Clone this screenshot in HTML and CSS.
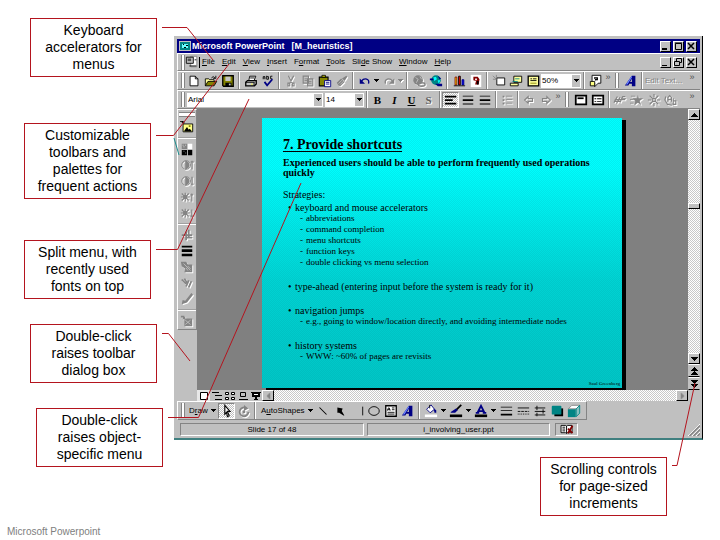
FILE: index.html
```html
<!DOCTYPE html>
<html lang="en">
<head>
<meta charset="utf-8">
<title>Microsoft Powerpoint</title>
<link rel="stylesheet" href="styles.css">
</head>
<body>
<svg class="sprite" aria-hidden="true">
  <symbol id="caret" viewBox="0 0 5 3"><path d="M0 0h5v1h-1v1h-1v1h-1v-1h-1v-1h-1z"/></symbol>
  <symbol id="up" viewBox="0 0 7 4"><path d="M3 0h1v1h1v1h1v1h1v1h-7v-1h1v-1h1v-1h1z"/></symbol>
  <symbol id="new" viewBox="0 0 16 16"><path fill="#fff" stroke="#000" d="M3.500 2.500h6l3 3v8h-9z"/><path fill="none" stroke="#000" d="M9.500 2.500v3h3"/></symbol>
  <symbol id="open" viewBox="0 0 16 16"><path fill="#ffff9c" stroke="#000" d="M1.500 13.500v-8h4l1 1h5v2"/><path fill="#848400" stroke="#000" d="M1.500 13.500l3-5h10l-3 5z"/><path fill="none" stroke="#000" d="M8.500 4.500q2-3 4 0M13.500 2v3h-3"/></symbol>
  <symbol id="save" viewBox="0 0 16 16"><path fill="#848400" stroke="#000" stroke-width="1.500" d="M2 2h12v12h-11l-1-1z"/><path fill="#c6c6c6" d="M5 3h6v5h-6z"/><path d="M5 10h7v4h-7z"/><path fill="#c6c6c6" d="M9 11h2v2h-2z"/></symbol>
  <symbol id="print" viewBox="0 0 16 16"><path fill="#fff" stroke="#000" d="M5.500 7.500l1-5h7l-2 5"/><path fill="#c6c6c6" stroke="#000" stroke-width="1.500" d="M2 9.500l2-2h10v4l-2 2h-10z"/><path stroke="#000" d="M2 9.500h10M7 4.500h5M11.500 9.500v4"/><path fill="#ff0" d="M8 11h2v1h-2z"/></symbol>
  <symbol id="spell" viewBox="0 0 16 16"><path fill="none" stroke="#000" d="M2.500 6v-3h2v3M3 4.500h1M6.500 2v4h2v-3h-2M13 2.500h-2v3h2"/><path fill="none" stroke="#000084" stroke-width="2" d="M4 9l3 4 6-7"/></symbol>
  <symbol id="cut" viewBox="0 0 16 16"><path fill="none" stroke="currentColor" stroke-width="1.300" d="M5 2l4 8M11 2l-4 8M4.500 10.500h2v3h-2zM9.500 10.500h2v3h-2z"/></symbol>
  <symbol id="copy" viewBox="0 0 16 16"><path fill="#c0c0c0" stroke="currentColor" stroke-width="1.300" d="M2.500 2.500h6v8h-6zM7.500 5.500h6v8h-6z"/><path stroke="currentColor" d="M4 5.500h3M4 7.500h3M9 8.500h3M9 10.500h3"/></symbol>
  <symbol id="paste" viewBox="0 0 16 16"><path fill="#848400" stroke="#000" stroke-width="1.300" d="M1.500 3.500h10v10h-10z"/><path fill="#ff0" stroke="#000" d="M4.500 1.500h4v2h-4z"/><path fill="#fff" stroke="#000084" d="M7.500 7.500h7v7h-7z"/><path stroke="#000084" d="M9 9.500h4M9 11.500h4"/></symbol>
  <symbol id="brush" viewBox="0 0 16 16"><path fill="currentColor" d="M2 10l5-5 4 4-5 5-2-1zM8 5l5-3 1 1-3 5z"/><path stroke="#c0c0c0" d="M4 11l4-4M6 12l4-4"/></symbol>
  <symbol id="undo" viewBox="0 0 16 16"><path fill="none" stroke="currentColor" stroke-width="1.500" d="M4 8c3-4 10-3 8 3"/><path fill="currentColor" d="M2 5v6h6z"/></symbol>
  <symbol id="redo" viewBox="0 0 16 16"><path fill="none" stroke="currentColor" stroke-width="1.500" d="M12 8c-3-4-10-3-8 3"/><path fill="currentColor" d="M14 5v6h-6z"/></symbol>
  <symbol id="link" viewBox="0 0 16 16"><circle cx="7" cy="7" r="5.500" fill="currentColor"/><path stroke="#c0c0c0" fill="none" d="M4 4l3 2-2 4M9 3l2 3"/><ellipse cx="11" cy="12" rx="4" ry="2" fill="none" stroke="currentColor" stroke-width="1.500"/></symbol>
  <symbol id="web" viewBox="0 0 16 16"><circle cx="8" cy="7" r="5.500" fill="#008484"/><path fill="#0ff" d="M5 4l3-1 1 3-3 2zM10 7h3l-2 4z"/><path fill="#000084" d="M1 5h4v2h-4zM7 11h8v3h-5zM10 2l4 3-2 1z"/></symbol>
  <symbol id="chart" viewBox="0 0 16 16"><path fill="#ff0" stroke="#840000" d="M3.500 3.500h2v9h-2z"/><path fill="#f00" stroke="#000" d="M7.500 2.500h2v10h-2z"/><path fill="#00f" stroke="#000084" d="M11.500 6.500h2v6h-2z"/><path d="M2 13h13v1h-13z"/></symbol>
  <symbol id="clip" viewBox="0 0 16 16"><path fill="#fff" d="M2 1h12v14h-12z"/><path fill="#840000" d="M5 3h5l2 3-1 6h-4l1-4-3-1z"/><path fill="#fff" d="M7 5h2v2h-2z"/><path d="M9 8h2v4h-2z"/></symbol>
  <symbol id="newslide" viewBox="0 0 16 16"><path fill="#fff" stroke="#000" d="M5.500 4.500h9v8h-9z"/><path stroke="#848484" d="M1 2l4 4M5 1v4M1 6h4"/></symbol>
  <symbol id="layout" viewBox="0 0 16 16"><path fill="#ffff9c" stroke="#000" d="M5.500 2.500h9v7h-9z"/><path fill="#ffff9c" stroke="#000" d="M1.500 10.500h9v3h-9z"/><path stroke="#008484" d="M7 5.500h5M4 8.500h6"/></symbol>
  <symbol id="design" viewBox="0 0 16 16"><path fill="#ffff9c" stroke="#000" stroke-width="1.500" d="M2.500 2.500h12v11h-12z"/><path stroke="#000" d="M5 5.500h2M8 5.500h4M5 7.500h7"/><path stroke="#848400" d="M5 10.500h7"/></symbol>
  <symbol id="help" viewBox="0 0 16 16"><path fill="#fff" stroke="#000" d="M3.500 1.500h10v9h-3l-4 4v-4h-3z"/><path fill="none" stroke="#000" stroke-width="1.500" d="M6.500 5.500v-1h3v2h-2v1"/><path fill="#ffff84" stroke="#000" d="M1.500 8.500h5v5h-5z"/></symbol>
  <symbol id="wordart" viewBox="0 0 16 16"><path fill="#000084" fill-rule="evenodd" d="M1 13l8-11h4v12h-4v-3h-3l-1 2zM9 5l-2 4h2z"/><path fill="#6b84ff" d="M2 12l7-10v2l-5 8z"/></symbol>
  <symbol id="left" viewBox="0 0 16 16"><path d="M1 3h13v2h-13zM1 7h9v2h-9zM1 11h13v2h-13z"/></symbol>
  <symbol id="center" viewBox="0 0 16 16"><path d="M2 3h12v1h-12zM2 7h12v2h-12zM2 12h12v1h-12z"/></symbol>
  <symbol id="right" viewBox="0 0 16 16"><path d="M2 3h12v1h-12zM2 7h12v2h-12zM2 12h12v1h-12z"/></symbol>
  <symbol id="bullets" viewBox="0 0 16 16"><path fill="currentColor" d="M3 3h2v2h-2zM3 7h2v2h-2zM3 11h2v2h-2zM7 3h7v1h-7zM7 7h7v1h-7zM7 11h7v1h-7z"/></symbol>
  <symbol id="arrl" viewBox="0 0 16 16"><path fill="none" stroke="currentColor" stroke-width="1.300" d="M3 8l4-4v2.500h5v3h-5v2.500z"/></symbol>
  <symbol id="arrr" viewBox="0 0 16 16"><path fill="none" stroke="currentColor" stroke-width="1.300" d="M13 8l-4-4v2.500h-5v3h5v2.500z"/></symbol>
  <symbol id="anim1" viewBox="0 0 16 16"><path fill="#fff" stroke="#000" stroke-width="2" d="M2 3h12v10h-12z"/><path d="M4 5h7v2h-7z"/></symbol>
  <symbol id="anim2" viewBox="0 0 16 16"><path fill="#fff" stroke="#000" stroke-width="2" d="M2 3h12v10h-12z"/><path d="M4 6h2v1h-2zM7 6h5v1h-5zM4 9h2v1h-2zM7 9h5v1h-5z"/></symbol>
  <symbol id="fx1" viewBox="0 0 16 16"><path stroke="currentColor" fill="none" stroke-width="1.300" d="M1 11l4-7M4 12l4-7M8 11l3-7M2 7.500h12M1 9.500h8M11 4h3M10 6h5"/></symbol>
  <symbol id="fx2" viewBox="0 0 16 16"><path fill="currentColor" d="M9 2l1 4h5l-4 3 2 5-4-3-4 3 1-5-3-3h5zM1 3h5v1h-5zM0 7h4v1h-4zM0 11h4v1h-4z"/></symbol>
  <symbol id="fx3" viewBox="0 0 16 16"><path stroke="currentColor" fill="none" stroke-width="1.300" d="M8 1v4M8 11v4M1 8h4M11 8h4M3 3l3 3M13 3l-3 3M3 13l3-3M13 13l-3-3M6.500 6.500h3v3h-3z"/></symbol>
  <symbol id="fx4" viewBox="0 0 16 16"><path stroke="currentColor" fill="none" stroke-width="1.300" d="M4.500 10v-5l2-2 2 2v5M5 7.500h3M10.500 6v7h3v-4h-3M2 4l-1 4 3 5 5 1"/></symbol>
  <symbol id="doc" viewBox="0 0 16 16"><path fill="#fff" stroke="#848484" d="M6.500 1.500h7v12h-7z"/><path fill="#c0c0c0" stroke="#000" d="M1.500 2.500h8v7h-8z"/><path fill="#505050" d="M3 4h4v3h-4z"/><path stroke="#000" d="M11 5.500h2M5 12.500h8"/></symbol>
  <symbol id="picture" viewBox="0 0 16 16"><path fill="#ffff84" stroke="#000" d="M3.500 4.500h11v9h-11z"/><path d="M0 1h4v1h1v2h-2v-1h-1v-1h-2zM5 12l3-4 2 3 1-1 2 2v1h-8z"/><path fill="#848400" d="M10 6h2v2h-2z"/></symbol>
  <symbol id="tones" viewBox="0 0 16 16"><path fill="#848484" d="M2 2h6v6h-6z"/><path fill="#fff" d="M9 2h5v6h-5zM3 3h1v1h-1zM6 3h1v1h-1zM4 5h1v1h-1z"/><path d="M2 9h6v6h-6zM9 9h5v6h-5z"/><path fill="#848484" d="M4 10h1v1h-1zM6 12h1v1h-1z"/></symbol>
  <symbol id="con" viewBox="0 0 16 16"><circle cx="7" cy="8" r="5" fill="none" stroke="currentColor"/><path fill="currentColor" d="M6 3a5 5 0 0 1 0 10zM13 3h1.500v10h-1.500zM12 4h4v1h-4z"/></symbol>
  <symbol id="conlow" viewBox="0 0 16 16"><circle cx="7" cy="8" r="5" fill="none" stroke="currentColor"/><path fill="currentColor" d="M6 3a5 5 0 0 1 0 10zM13 3h1.500v10h-1.500zM12 11h4v1h-4z"/></symbol>
  <symbol id="bri" viewBox="0 0 16 16"><circle cx="6" cy="8" r="2.500" fill="currentColor"/><path stroke="currentColor" fill="none" stroke-width="1.300" d="M6 3v10M1 8h10M2 4l8 8M10 4l-8 8M13.500 4v9M12 5.500h3"/></symbol>
  <symbol id="brilow" viewBox="0 0 16 16"><circle cx="6" cy="8" r="2.500" fill="currentColor"/><path stroke="currentColor" fill="none" stroke-width="1.300" d="M6 3v10M1 8h10M2 4l8 8M10 4l-8 8M13.500 4v9M12 11.500h3"/></symbol>
  <symbol id="crop" viewBox="0 0 16 16"><path fill="none" stroke="currentColor" stroke-width="2" d="M6 11h8M2 8h12M7 4v10M10 2v10"/></symbol>
  <symbol id="lines" viewBox="0 0 16 16"><path d="M2 2h12v2h-12zM2 6h12v3h-12zM2 11h12v3h-12z"/></symbol>
  <symbol id="recolor" viewBox="0 0 16 16"><path fill="currentColor" d="M1 2h6l2 3h5v9h-9l1-4-4-3z"/><path stroke="#c0c0c0" d="M4 4l8 8M9 7l3 3M7 9l2 3"/></symbol>
  <symbol id="format" viewBox="0 0 16 16"><path stroke="currentColor" stroke-width="2" fill="none" d="M2 4l5 5M5 3l4 6M10 5l-3 7M13 6l-3 7"/></symbol>
  <symbol id="pen" viewBox="0 0 16 16"><path fill="currentColor" d="M13 1l2 2-7 9-6 2 1-5 3 1z"/></symbol>
  <symbol id="reset" viewBox="0 0 16 16"><path fill="currentColor" d="M1 2h4v1h1v2h8v9h-9v-8h-2v-2h-2z"/><path stroke="#c0c0c0" d="M6 7l6 5M12 7l-6 5"/></symbol>
  <symbol id="pointer" viewBox="0 0 16 16"><path fill="#fff" stroke="#000" stroke-width="1.300" d="M5.500 1.500l6 7h-3l2 5-2 1-1-5-2 2z"/></symbol>
  <symbol id="rotate" viewBox="0 0 16 16"><path fill="none" stroke="currentColor" stroke-width="2" d="M11 5a5 5 0 1 0 2 4"/><path fill="currentColor" d="M8 1l5 4-5 3z"/><circle cx="8" cy="9" r="1.500" fill="currentColor"/></symbol>
  <symbol id="line" viewBox="0 0 16 16"><path stroke="#000" stroke-width="1.200" d="M4 4l8 8"/></symbol>
  <symbol id="arrow" viewBox="0 0 16 16"><path d="M5 4l6 1-1 3 3 5h-1l-5-3-2 0z"/></symbol>
  <symbol id="rect" viewBox="0 0 16 16"><path stroke="#000" d="M14.500 3v10"/></symbol>
  <symbol id="oval" viewBox="0 0 16 16"><ellipse cx="8" cy="8" rx="6" ry="5" fill="none" stroke="#000"/></symbol>
  <symbol id="textbox" viewBox="0 0 16 16"><path fill="#fff" stroke="#000" stroke-width="1.500" d="M2 2h12v12h-12z"/><path stroke="#000" d="M9 4.500h3M9 6.500h3M4 9.500h8M4 11.500h8M4 7.500l1-3h1l1 3M4 6.500h3" fill="none"/></symbol>
  <symbol id="fill" viewBox="0 0 16 16"><path fill="#fff" stroke="#000084" d="M3 6l5-5 4 5-5 4z"/><path fill="#000084" d="M11 5l3 2v3h-2z"/><path stroke="#000" fill="none" d="M6.500 5v-4"/><path fill="#fff" d="M1 12h14v3h-14z"/></symbol>
  <symbol id="linecolor" viewBox="0 0 16 16"><path stroke="#000" stroke-width="2" d="M8 7l6-6"/><path fill="#000084" d="M2 9l6-4 2 2-3 3h-5z"/><path d="M1 12h14v3h-14z"/></symbol>
  <symbol id="fontcolor" viewBox="0 0 16 16"><path fill="none" stroke="#000084" stroke-width="2" d="M4 10l4-8 4 8M6 8h4M2 10h4M10 10h4"/><path d="M1 12h14v3h-14z"/></symbol>
  <symbol id="linestyle" viewBox="0 0 16 16"><path d="M2 3h13v1h-13zM2 7h13v1h-13zM2 11h13v2h-13z"/></symbol>
  <symbol id="dash" viewBox="0 0 16 16"><path stroke="#000" d="M2 4.500h13"/><path stroke="#000" stroke-dasharray="3 1" d="M2 8.500h13"/><path stroke="#000" stroke-dasharray="1 1" d="M2 11.500h13"/></symbol>
  <symbol id="arrows" viewBox="0 0 16 16"><path stroke="#000" fill="none" d="M2 4.500h12M2 8.500h12M2 12.500h12M4.500 2v5M11.500 6v5M4.500 10v4"/></symbol>
  <symbol id="shadow" viewBox="0 0 16 16"><path d="M5 5h10v9h-10z"/><rect x="2" y="2" width="11" height="10" rx="1" fill="#008484"/></symbol>
  <symbol id="cube" viewBox="0 0 16 16"><path fill="#fff" stroke="#848484" d="M1.500 5.500l4-4h9l-4 4z"/><path fill="#84c0c0" stroke="#008484" d="M10.500 5.500l4-4v9l-4 4z"/><path fill="#008484" d="M1 6h9v9h-9z"/></symbol>
  <symbol id="normal" viewBox="0 0 12 10"><path fill="#fff" stroke="#000" d="M2.500 1.500h7v7h-7z"/></symbol>
  <symbol id="outline" viewBox="0 0 12 10"><path d="M1 1h7v1h-7zM4 4h7v1h-7zM4 8h7v1h-7z"/></symbol>
  <symbol id="sorter" viewBox="0 0 12 10"><path fill="#fff" stroke="#000" d="M1.500 1.500h3v2h-3zM7.500 1.500h3v2h-3zM1.500 6.500h3v2h-3zM7.500 6.500h3v2h-3z"/></symbol>
  <symbol id="notes" viewBox="0 0 12 10"><path fill="none" stroke="#000" d="M3.500 1.500h5v4h-5zM2 8.500h9"/></symbol>
  <symbol id="show" viewBox="0 0 12 10"><path d="M1 1h10v1h-1v4h-3v2h1v1h-4v-1h1v-2h-3v-4h-1z"/><path fill="#fff" d="M4 3h4v1h-4z"/></symbol>
  <symbol id="book" viewBox="0 0 18 12"><path fill="#fff" stroke="#000" d="M2.500 1.500h5l1 1 1-1h5v8h-5l-1 1-1-1h-5z"/><path stroke="#000" d="M8.500 2v8M4 3.500h3M4 5.500h3M4 7.500h3"/><path stroke="#840000" stroke-width="2" fill="none" d="M10 5l5 5M15 2l-5 8"/></symbol>
</svg>

<main class="figure">
  <aside class="notes">
    <p class="note note-keys">Keyboard<br>accelerators for<br>menus</p>
    <p class="note note-bars">Customizable<br>toolbars and<br>palettes for<br>frequent actions</p>
    <p class="note note-split">Split menu, with<br>recently used<br>fonts on top</p>
    <p class="note note-toolbar">Double-click<br>raises toolbar<br>dialog box</p>
    <p class="note note-object">Double-click<br>raises object-<br>specific menu</p>
  </aside>

  <div class="right">
    <section class="window">
      <header class="titlebar">
        <svg class="appicon" viewBox="0 0 12 12"><path fill="#c0c0c0" d="M0 1h12v10h-12z"/><path fill="#6ff" stroke="#008484" stroke-width="2" d="M2 3h8v6h-8z"/><path d="M4 4h1v1h-1zM7 5h2v1h-2zM5 7h2v1h-2z"/></svg>
        <h1>Microsoft PowerPoint</h1><span>[M_heuristics]</span>
        <div class="sysbuttons">
          <button aria-label="Minimize"><svg viewBox="0 0 9 9"><path d="M1 6h5v2h-5z"/></svg></button>
          <button aria-label="Maximize"><svg viewBox="0 0 9 9"><path fill="none" stroke="#000" d="M1.500 1.500h6v6h-6zM1 1h7"/></svg></button>
          <button aria-label="Close"><svg viewBox="0 0 9 9"><path stroke="#000" stroke-width="1.500" d="M1 1l6 6M7 1l-6 6"/></svg></button>
        </div>
      </header>

      <nav class="bar menubar">
        <i class="grip"></i>
        <svg class="icon"><use href="#doc"/></svg><i class="textcursor"></i>
        <div class="menus">
          <button><u>F</u>ile</button><button><u>E</u>dit</button><button><u>V</u>iew</button><button><u>I</u>nsert</button><button>F<u>o</u>rmat</button><button><u>T</u>ools</button><button>Sli<u>d</u>e Show</button><button><u>W</u>indow</button><button><u>H</u>elp</button>
        </div>
        <div class="sysbuttons">
          <button aria-label="Minimize slide"><svg viewBox="0 0 9 9"><path d="M1 7h5v1h-5z"/></svg></button>
          <button aria-label="Restore slide"><svg viewBox="0 0 9 9"><path fill="none" stroke="#000" d="M2.500 3v-2.500h5v4h-2M.5 3.500h5v4h-5z"/></svg></button>
          <button aria-label="Close slide"><svg viewBox="0 0 9 9"><path stroke="#000" stroke-width="1.500" d="M1 1l6 6M7 1l-6 6"/></svg></button>
        </div>
      </nav>

      <div class="bar standard">
        <i class="grip"></i>
        <button class="tool" aria-label="New"><svg><use href="#new"/></svg></button>
        <button class="tool" aria-label="Open"><svg><use href="#open"/></svg></button>
        <button class="tool" aria-label="Save"><svg><use href="#save"/></svg></button>
        <i class="sep"></i>
        <button class="tool" aria-label="Print"><svg><use href="#print"/></svg></button>
        <button class="tool" aria-label="Spelling"><svg><use href="#spell"/></svg></button>
        <i class="sep"></i>
        <button class="tool off" aria-label="Cut"><svg><use href="#cut"/></svg></button>
        <button class="tool off" aria-label="Copy"><svg><use href="#copy"/></svg></button>
        <button class="tool" aria-label="Paste"><svg><use href="#paste"/></svg></button>
        <button class="tool off" aria-label="Format painter"><svg><use href="#brush"/></svg></button>
        <i class="sep"></i>
        <button class="tool blue" aria-label="Undo"><svg><use href="#undo"/></svg></button>
        <button class="more" aria-label="Undo list"><svg><use href="#caret"/></svg></button>
        <button class="tool off" aria-label="Redo"><svg><use href="#redo"/></svg></button>
        <button class="more off" aria-label="Redo list"><svg><use href="#caret"/></svg></button>
        <i class="sep"></i>
        <button class="tool off" aria-label="Hyperlink"><svg><use href="#link"/></svg></button>
        <button class="tool" aria-label="Web toolbar"><svg><use href="#web"/></svg></button>
        <i class="sep"></i>
        <button class="tool" aria-label="Chart"><svg><use href="#chart"/></svg></button>
        <button class="tool" aria-label="Clip art"><svg><use href="#clip"/></svg></button>
        <i class="sep"></i>
        <button class="tool" aria-label="New slide"><svg><use href="#newslide"/></svg></button>
        <button class="tool" aria-label="Slide layout"><svg><use href="#layout"/></svg></button>
        <button class="tool" aria-label="Apply design"><svg><use href="#design"/></svg></button>
        <span class="combo combo-zoom"><select aria-label="Zoom"><option>50%</option></select><b><svg><use href="#caret"/></svg></b></span>
        <i class="sep"></i>
        <button class="tool" aria-label="Help"><svg><use href="#help"/></svg></button>
        <button class="chevron" aria-label="More buttons">»</button>
        <i class="grip second"></i>
        <button class="tool" aria-label="Insert WordArt"><svg><use href="#wordart"/></svg></button>
        <i class="sep"></i>
        <button class="edittext" disabled>Edit Text...</button>
        <button class="chevron last" aria-label="More WordArt buttons">»</button>
      </div>

      <div class="bar formatting">
        <i class="grip"></i>
        <span class="combo combo-font"><select aria-label="Font"><option>Arial</option></select><b><svg><use href="#caret"/></svg></b></span>
        <span class="combo combo-size"><select aria-label="Font size"><option>14</option></select><b><svg><use href="#caret"/></svg></b></span>
        <i class="sep"></i>
        <button class="tool letter bold">B</button>
        <button class="tool letter italic">I</button>
        <button class="tool letter under">U</button>
        <button class="tool letter shadowed">S</button>
        <i class="sep"></i>
        <button class="tool pressed" aria-label="Align left"><svg><use href="#left"/></svg></button>
        <button class="tool" aria-label="Center"><svg><use href="#center"/></svg></button>
        <button class="tool" aria-label="Align right"><svg><use href="#right"/></svg></button>
        <i class="sep"></i>
        <button class="tool off" aria-label="Bullets"><svg><use href="#bullets"/></svg></button>
        <i class="sep"></i>
        <button class="tool off" aria-label="Promote"><svg><use href="#arrl"/></svg></button>
        <button class="tool off" aria-label="Demote"><svg><use href="#arrr"/></svg></button>
        <button class="chevron" aria-label="More formatting">»</button>
        <i class="grip second"></i>
        <button class="tool" aria-label="Animate title"><svg><use href="#anim1"/></svg></button>
        <button class="tool" aria-label="Animate text"><svg><use href="#anim2"/></svg></button>
        <i class="sep"></i>
        <button class="tool off" aria-label="Drive-in effect"><svg><use href="#fx1"/></svg></button>
        <button class="tool off" aria-label="Flying effect"><svg><use href="#fx2"/></svg></button>
        <button class="tool off" aria-label="Camera effect"><svg><use href="#fx3"/></svg></button>
        <button class="tool off" aria-label="Flash once"><svg><use href="#fx4"/></svg></button>
        <button class="chevron last" aria-label="More effects">»</button>
      </div>

      <div class="workspace">
        <div class="side">
          <div class="palette">
            <i class="hgrip"></i>
            <button class="tool" aria-label="Insert picture"><svg><use href="#picture"/></svg></button>
            <i class="hsep"></i>
            <button class="tool" aria-label="Image control"><svg><use href="#tones"/></svg></button>
            <button class="tool off" aria-label="More contrast"><svg><use href="#con"/></svg></button>
            <button class="tool off" aria-label="Less contrast"><svg><use href="#conlow"/></svg></button>
            <button class="tool off" aria-label="More brightness"><svg><use href="#bri"/></svg></button>
            <button class="tool off" aria-label="Less brightness"><svg><use href="#brilow"/></svg></button>
            <i class="hsep"></i>
            <button class="tool off" aria-label="Crop"><svg><use href="#crop"/></svg></button>
            <button class="tool" aria-label="Line style"><svg><use href="#lines"/></svg></button>
            <button class="tool off" aria-label="Recolor"><svg><use href="#recolor"/></svg></button>
            <button class="tool off" aria-label="Format picture"><svg><use href="#format"/></svg></button>
            <button class="tool off" aria-label="Transparent color"><svg><use href="#pen"/></svg></button>
            <i class="hsep"></i>
            <button class="tool off" aria-label="Reset picture"><svg><use href="#reset"/></svg></button>
          </div>
        </div>
        <div class="pane">
          <div class="view">
            <div class="canvas">
              <article class="slide">
                <h2>7. Provide shortcuts</h2>
                <p class="lead">Experienced users should be able to perform frequently used operations<br>quickly</p>
                <h3>Strategies:</h3>
                <ul>
                  <li>keyboard and mouse accelerators
                    <ul><li>abbreviations</li><li>command completion</li><li>menu shortcuts</li><li>function keys</li><li>double clicking vs menu selection</li></ul></li>
                  <li>type-ahead (entering input before the system is ready for it)</li>
                  <li>navigation jumps
                    <ul><li>e.g., going to window/location directly, and avoiding intermediate nodes</li></ul></li>
                  <li>history systems
                    <ul><li>WWW: ~60% of pages are revisits</li></ul></li>
                </ul>
                <footer>Saul Greenberg</footer>
              </article>
            </div>
            <div class="vscroll">
              <button class="arrow" aria-label="Scroll up"><svg><use href="#up"/></svg></button>
              <div class="track"><i class="thumb"></i></div>
              <button class="arrow" aria-label="Scroll down"><svg class="flip"><use href="#up"/></svg></button>
              <button class="arrow page" aria-label="Previous slide"><svg><use href="#up"/></svg><svg><use href="#up"/></svg></button>
              <button class="arrow page" aria-label="Next slide"><svg class="flip"><use href="#up"/></svg><svg class="flip"><use href="#up"/></svg></button>
            </div>
          </div>
          <div class="hscroll">
            <button class="viewbtn chosen" aria-label="Slide view"><svg><use href="#normal"/></svg></button>
            <button class="viewbtn" aria-label="Outline view"><svg><use href="#outline"/></svg></button>
            <button class="viewbtn" aria-label="Slide sorter"><svg><use href="#sorter"/></svg></button>
            <button class="viewbtn" aria-label="Notes page"><svg><use href="#notes"/></svg></button>
            <button class="viewbtn" aria-label="Slide show"><svg><use href="#show"/></svg></button>
            <button class="arrow grey" aria-label="Scroll left"><svg class="ccw"><use href="#up"/></svg></button>
            <div class="track"></div>
            <button class="arrow grey" aria-label="Scroll right"><svg class="cw"><use href="#up"/></svg></button>
          </div>
        </div>
      </div>

      <div class="bar drawing">
        <i class="grip"></i>
        <button class="text draw"><span>D<u>r</u>aw</span><svg><use href="#caret"/></svg></button>
        <button class="tool pressed" aria-label="Select objects"><svg><use href="#pointer"/></svg></button>
        <button class="tool off" aria-label="Free rotate"><svg><use href="#rotate"/></svg></button>
        <i class="sep"></i>
        <button class="text shapes"><span>A<u>u</u>toShapes</span><svg><use href="#caret"/></svg></button>
        <button class="tool" aria-label="Line"><svg><use href="#line"/></svg></button>
        <button class="tool" aria-label="Arrow"><svg><use href="#arrow"/></svg></button>
        <button class="tool" aria-label="Rectangle"><svg><use href="#rect"/></svg></button>
        <button class="tool" aria-label="Oval"><svg><use href="#oval"/></svg></button>
        <button class="tool" aria-label="Text box"><svg><use href="#textbox"/></svg></button>
        <button class="tool" aria-label="WordArt"><svg><use href="#wordart"/></svg></button>
        <i class="sep"></i>
        <button class="tool" aria-label="Fill color"><svg><use href="#fill"/></svg></button>
        <button class="more" aria-label="Fill colors"><svg><use href="#caret"/></svg></button>
        <button class="tool" aria-label="Line color"><svg><use href="#linecolor"/></svg></button>
        <button class="more" aria-label="Line colors"><svg><use href="#caret"/></svg></button>
        <button class="tool" aria-label="Font color"><svg><use href="#fontcolor"/></svg></button>
        <button class="more" aria-label="Font colors"><svg><use href="#caret"/></svg></button>
        <button class="tool" aria-label="Line style"><svg><use href="#linestyle"/></svg></button>
        <button class="tool" aria-label="Dash style"><svg><use href="#dash"/></svg></button>
        <button class="tool" aria-label="Arrow style"><svg><use href="#arrows"/></svg></button>
        <button class="tool" aria-label="Shadow"><svg><use href="#shadow"/></svg></button>
        <button class="tool" aria-label="3-D"><svg><use href="#cube"/></svg></button>
      </div>

      <footer class="status">
        <span class="cell cell-page">Slide 17 of 48</span>
        <span class="cell cell-file">i_involving_user.ppt</span>
        <span class="cell cell-book"><svg><use href="#book"/></svg></span>
        <svg class="sizer" viewBox="0 0 12 12"><path stroke="#fff" d="M0 12l12-12M4 12l8-8M8 12l4-4"/><path stroke="#848484" stroke-width="1.500" d="M1.500 12l10.500-10.500M5.500 12l6.500-6.500M9.500 12l2.500-2.500"/></svg>
      </footer>
    </section>
    <p class="note note-scroll">Scrolling controls<br>for page-sized<br>increments</p>
  </div>

  <svg class="leaders" viewBox="0 0 720 540" aria-hidden="true">
    <path d="M162 27.500h25L213 60M156 135.500h17.500L229 64M156 249.500h21.500L249 99M162 333.500h6.500L190 361M168 417.500h30.500L301 183M695 383l-18 82.500h-5"/>
    <path class="teal" d="M174 138l5 17"/>
  </svg>
</main>
<p class="source">Microsoft Powerpoint</p>
</body>
</html>
```
FILE: styles.css
```css
* { box-sizing: border-box; }

body {
  margin: 0;
  background: #fff;
  color: #000;
  font-family: "Liberation Sans", Arial, sans-serif;
}

p, h1, h2, h3, ul { margin: 0; padding: 0; font: inherit; }

button {
  margin: 0;
  padding: 0;
  border: 0;
  background: none;
  color: inherit;
  font: inherit;
}

svg { display: block; flex: none; }
.sprite { position: absolute; width: 0; height: 0; }

/* Page: notes on the left, annotated window on the right */
.figure {
  position: relative;
  display: grid;
  grid-template-columns: 174px 1fr;
}

.notes { padding-top: 18px; }

.note {
  width: 127px;
  padding: 3px 0;
  border: 1px solid #b4141e;
  background: #fff;
  font-size: 14px;
  line-height: 17px;
  text-align: center;
}

.note-keys { margin: 0 0 46px 30px; }
.note-bars { margin: 0 0 41px 24px; }
.note-split { margin: 0 0 25px 24px; }
.note-toolbar { margin: 0 0 25px 30px; }
.note-object { margin-left: 36px; }
.note-scroll { align-self: flex-end; margin: 17px 36px 0 0; }

.right {
  display: flex;
  flex-direction: column;
  padding: 36px 17px 0 0;
}

.source {
  padding: 10px 7px 0;
  color: #808080;
  font-size: 10px;
  line-height: 12px;
}

.leaders {
  position: absolute;
  top: 0;
  left: 0;
  width: 720px;
  height: 540px;
  pointer-events: none;
  fill: none;
  stroke: #b4141e;
}
.leaders .teal { stroke: #1c8c8c; }

/* Window frame */
.window {
  padding: 3px 2px 0 3px;
  border-right: 1px solid #000;
  border-bottom: 2px solid #408080;
  background: #c0c0c0;
  font-size: 8px;
  line-height: 10px;
}

.titlebar {
  display: flex;
  align-items: center;
  height: 14px;
  padding: 0 3px 0 2px;
  background: #000084;
  color: #fff;
  font-size: 9px;
  font-weight: bold;
}
.titlebar span { margin-left: 7px; }
.appicon { width: 12px; height: 12px; margin-right: 1px; }

.sysbuttons { display: flex; gap: 2px; margin-left: auto; }
.sysbuttons button {
  width: 11px;
  height: 11px;
  border: 1px solid;
  border-color: #fff #000 #000 #fff;
  background: #c0c0c0;
}
.sysbuttons svg { width: 9px; height: 9px; }

/* Tool bars */
.bar {
  display: flex;
  align-items: center;
  height: 19px;
  padding-left: 3px;
  border-top: 1px solid #fff;
  border-left: 1px solid #fff;
  border-bottom: 1px solid #848484;
}
.menubar { height: 18px; padding-right: 3px; }

.grip {
  width: 4px;
  height: 15px;
  flex: none;
  border: solid #848484;
  border-width: 0 1px;
  background: #fff;
}
.grip.second { margin: 0 3px; }

.icon { width: 14px; height: 14px; }
.textcursor { width: 1px; height: 11px; background: #000; }
.menus { display: flex; gap: 7px; margin-left: 2px; }
.menus u { text-decoration-thickness: 1px; }

.tool {
  display: flex;
  align-items: center;
  justify-content: center;
  width: 17px;
  height: 16px;
  flex: none;
}
.tool svg { width: 14px; height: 14px; }
.off { color: #848484; }
.off svg { filter: drop-shadow(1px 1px 0 #fff); }
.blue { color: #000084; }

.pressed {
  border: 1px solid;
  border-color: #848484 #fff #fff #848484;
  background: repeating-conic-gradient(#fff 0 25%, #c0c0c0 0 50%) 0 0 / 2px 2px;
}

.sep {
  width: 2px;
  height: 17px;
  flex: none;
  margin: 0 2px;
  border-left: 1px solid #848484;
  background: #fff;
}
.formatting .sep { margin: 0 1px 0 2px; }

.more { display: flex; justify-content: center; width: 7px; flex: none; fill: currentColor; }
.more svg, .combo svg, .text svg { width: 5px; height: 3px; }
.drawing .more { width: 8px; }

.chevron { align-self: flex-start; width: 8px; height: 10px; color: #505050; font-size: 9px; }
.last { margin: 0 4px 0 auto; }
.edittext { color: #848484; text-shadow: 1px 1px 0 #fff; white-space: nowrap; }

.combo { display: flex; height: 14px; flex: none; background: #fff; }
.combo select {
  flex: 1;
  min-width: 0;
  padding: 0 0 0 1px;
  border: 0;
  appearance: none;
  background: none;
  color: #000;
  font: inherit;
}
.combo b {
  display: flex;
  align-items: center;
  justify-content: center;
  width: 8px;
  margin: 1px;
  background: #c0c0c0;
}
.combo-zoom { width: 40px; }
.combo-font { width: 136px; margin-left: 2px; }
.combo-size { width: 39px; margin-left: 2px; }

.letter { font: bold 11px "Liberation Serif", serif; }
.italic { font-style: italic; }
.under { text-decoration: underline; }
.shadowed { color: #606060; text-shadow: 1px 1px 0 #fff; }

.text { display: flex; align-items: center; gap: 3px; flex: none; padding-left: 4px; }
.draw { width: 33px; }
.shapes { width: 56px; padding-left: 3px; }

/* Work area */
.workspace { display: flex; }
.side { width: 20px; flex: none; }
.palette {
  display: flex;
  flex-direction: column;
  align-items: center;
  border: 1px solid;
  border-color: #fff #848484 #848484 #fff;
}
.hgrip {
  width: 16px;
  height: 5px;
  margin: 2px 0;
  border: solid #848484;
  border-width: 1px 0;
  background: #fff;
}
.hsep { width: 18px; height: 2px; margin: 2px 0; background: #fff; border-top: 1px solid #a0a0a0; }

.pane { display: flex; flex: 1; flex-direction: column; min-width: 0; }
.view { display: flex; }
.canvas {
  flex: 1;
  min-width: 0;
  padding: 9px 66px 2px 65px;
  background: #808080;
}

.slide {
  display: flex;
  flex-direction: column;
  min-height: 270px;
  padding: 20px 2px 1px 21px;
  background:
    repeating-conic-gradient(rgb(0 110 120 / 10%) 0 25%, transparent 0 50%) 0 0 / 2px 2px,
    linear-gradient(#00ffff 0, #00ffff 18%, #00e8e8 40%, #00d4d4 60%, #00cccc 80%, #00c6c6 100%);
  box-shadow: 4px 2px 0 #000;
  font-family: "Liberation Serif", serif;
  font-size: 10px;
  line-height: 11px;
}
.slide h2 {
  align-self: flex-start;
  border-bottom: 1px solid #000;
  font-size: 14px;
  font-weight: bold;
  line-height: 13px;
}
.lead { margin-top: 6px; font-weight: bold; line-height: 10px; white-space: nowrap; }
.slide h3 { margin: 11px 0 2px; }
.slide ul { list-style: none; }
.slide > ul > li { margin-bottom: 13px; padding-left: 12px; }
.slide > ul > li::before { content: "•"; float: left; margin-left: -7px; }
.slide li li { padding-left: 11px; font-size: 9px; white-space: nowrap; }
.slide li li::before { content: "-"; float: left; margin-left: -6px; }
.slide footer { margin-top: auto; font-size: 5px; line-height: 7px; text-align: right; }

.vscroll { display: flex; flex-direction: column; width: 12px; }
.track {
  flex: 1;
  background: repeating-conic-gradient(#fff 0 25%, #c8c8c8 0 50%) 0 0 / 2px 2px;
}
.thumb {
  display: block;
  height: 6px;
  margin-top: 83px;
  border: 1px solid;
  border-color: #fff #000 #000 #fff;
  background: #c0c0c0;
}
.arrow {
  display: flex;
  flex-direction: column;
  align-items: center;
  justify-content: center;
  width: 12px;
  height: 11px;
  flex: none;
  border: 1px solid;
  border-color: #fff #000 #000 #fff;
  background: #c0c0c0;
}
.arrow svg { width: 7px; height: 4px; }
.page { height: 13px; border-color: #fff transparent #000; }
.flip { transform: rotate(180deg); }
.cw { transform: rotate(90deg); }
.ccw { transform: rotate(-90deg); }
.grey { fill: #848484; }

.hscroll { display: flex; height: 11px; margin-right: 12px; }
.viewbtn { display: flex; align-items: center; justify-content: center; width: 13px; flex: none; }
.viewbtn svg { width: 12px; height: 10px; }
.chosen { background: #e8e8e8; }

.drawing { width: 410px; border-right: 1px solid #848484; }

/* Status bar */
.status { display: flex; align-items: center; height: 18px; padding-left: 3px; }
.cell {
  height: 13px;
  border: 1px solid;
  border-color: #848484 #fff #fff #848484;
  line-height: 12px;
  text-align: center;
}
.cell-page { width: 184px; }
.cell-file { width: 183px; margin: 0 5px 0 3px; }
.cell-book { width: 23px; padding-left: 2px; }
.cell-book svg { width: 18px; height: 11px; }
.sizer { width: 12px; height: 12px; margin: 2px 0 0 auto; }
```
